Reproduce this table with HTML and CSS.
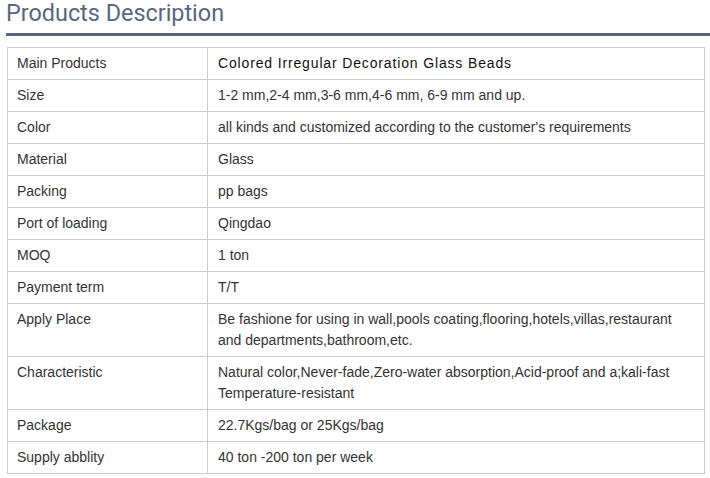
FILE: index.html
```html
<!DOCTYPE html>
<html>
<head>
<meta charset="utf-8">
<link rel="stylesheet" href="styles.css">
</head>
<body>
<div class="page">
  <h2 class="title">Products Description</h2>
  <table class="spec">
    <tr><td class="k">Main Products</td><td class="v main">Colored Irregular Decoration Glass Beads</td></tr>
    <tr><td class="k">Size</td><td class="v">1-2 mm,2-4 mm,3-6 mm,4-6 mm, 6-9 mm and up.</td></tr>
    <tr><td class="k">Color</td><td class="v">all kinds and customized according to the customer's requirements</td></tr>
    <tr><td class="k">Material</td><td class="v">Glass</td></tr>
    <tr><td class="k">Packing</td><td class="v">pp bags</td></tr>
    <tr><td class="k">Port of loading</td><td class="v">Qingdao</td></tr>
    <tr><td class="k">MOQ</td><td class="v">1 ton</td></tr>
    <tr><td class="k">Payment term</td><td class="v">T/T</td></tr>
    <tr><td class="k">Apply Place</td><td class="v">Be fashione for using in wall,pools coating,flooring,hotels,villas,restaurant<br>and departments,bathroom,etc.</td></tr>
    <tr><td class="k">Characteristic</td><td class="v">Natural color,Never-fade,Zero-water absorption,Acid-proof and a;kali-fast<br>Temperature-resistant</td></tr>
    <tr><td class="k">Package</td><td class="v">22.7Kgs/bag or 25Kgs/bag</td></tr>
    <tr><td class="k">Supply abblity</td><td class="v">40 ton -200 ton per week</td></tr>
  </table>
</div>
</body>
</html>
```
FILE: styles.css
```css
html, body {
  margin: 0;
  padding: 0;
  background: #fff;
}
.page {
  padding: 0 0 0 6px;
}
.title {
  margin: 0;
  font-family: Roboto, "Liberation Sans", sans-serif;
  font-weight: 400;
  font-size: 23.4px;
  line-height: 26px;
  color: #59677e;
  padding-top: 0;
  padding-bottom: 7px;
  border-bottom: 3px solid #59677e;
  margin-bottom: 11px;
}
.spec {
  border-collapse: collapse;
  width: 698px;
  margin-left: 1px;
  font-family: "Liberation Sans", Arial, sans-serif;
  font-size: 14px;
  color: #333;
}
.spec td {
  border: 1px solid #cccccc;
  padding: 5px 10px 5px 9px;
  line-height: 21px;
  vertical-align: top;
}
.spec td.k {
  width: 180px;
}
.spec td.v {
  padding-left: 10px;
}
.spec td.main {
  font-size: 14px;
  letter-spacing: 0.85px;
  color: #111;
}
```
